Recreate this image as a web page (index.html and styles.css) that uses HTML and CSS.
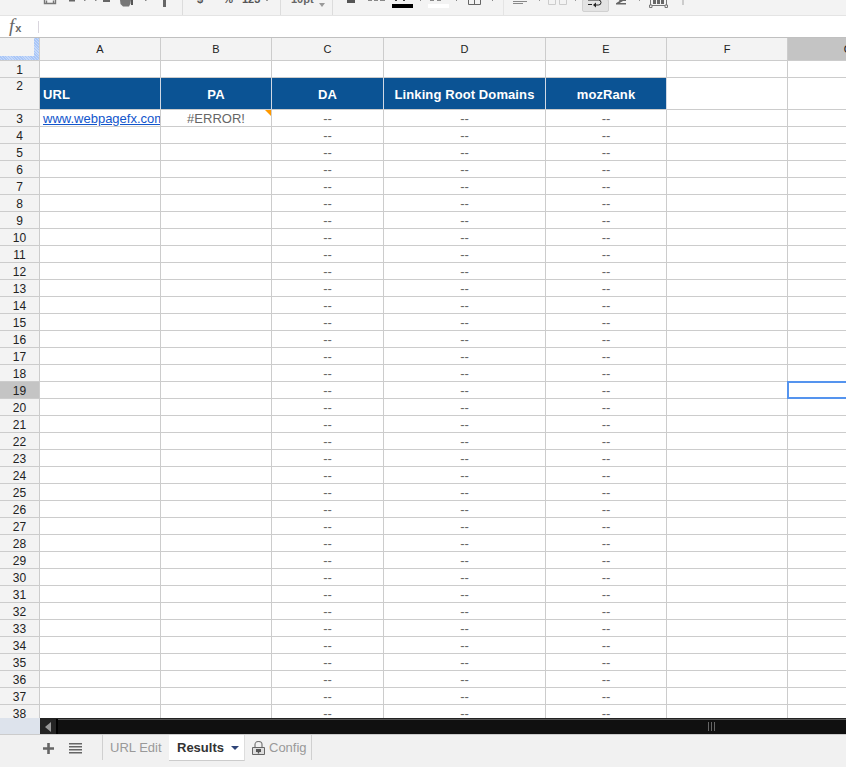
FILE: index.html
```html
<!DOCTYPE html>
<html lang="en">
<head>
<meta charset="utf-8">
<title>Results</title>
<link rel="stylesheet" href="styles.css">
</head>
<body>
<div class="app">
  <div class="toolbar">
    <div class="tb-group tb-g1">
      <svg width="182" height="15" viewBox="0 0 182 15">
        <path d="M44.500 0v3.500h2v-3M55.500 0v3.500h-2v-3M46 3.500h8" fill="none" stroke="#777" stroke-width="1.400"/>
        <path d="M69 0h6v1.600h-6zM103 0h7v2h-7z" fill="#666"/>
        <path d="M84 0h1.500v1H84zM95 0h1.500v1H95zM145 0h1.500v1H145z" fill="#888"/>
        <path d="M120 0h11l-.5 3.500-1.500 3h-6l-2.500-2.500z" fill="#777"/>
        <path d="M131 0h2v5h-2z" fill="#555"/>
        <path d="M163 0h3v7h-3z" fill="#666"/>
      </svg>
    </div>
    <div class="tb-group tb-g2">
      <span class="tb-text tb-dollar">$</span>
      <span class="tb-text tb-pct">%</span>
      <span class="tb-text tb-num">123</span>
      <i class="tb-dot"></i>
    </div>
    <div class="tb-group tb-g3">
      <span class="tb-text tb-size">10pt</span>
      <i class="tb-caret"></i>
    </div>
    <div class="tb-group tb-g4">
      <svg width="170" height="15" viewBox="0 0 170 15">
        <path d="M14 0h8v3h-8z" fill="#555"/>
        <path d="M35 0h4v1h-4zM41 0h4v1h-4zM47 0h5v1h-5zM87 0h1v1h-1zM123 0h1v1h-1zM159 0h1v1h-1zM97 0h4v1h-4zM104 0h4v1h-4z" fill="#888"/>
        <path d="M62 0h2v1h-2zM70 0h2v1h-2z" fill="#444"/>
        <path d="M59 4h21v4H59z" fill="#000"/>
        <path d="M95 4h21v4H95z" fill="#fff"/>
        <path d="M135.500 0v4.500h12V0M141.500 0v4.500" fill="none" stroke="#666"/>
      </svg>
    </div>
    <div class="tb-group tb-g5">
      <svg class="tb-icons-left" width="78" height="15" viewBox="0 0 78 15">
        <path d="M9 1.500h14M9 3.500h10" fill="none" stroke="#888"/>
        <path d="M35 0h1v1h-1zM71 0h1v1h-1z" fill="#999"/>
        <path d="M44.500 0v4.500h7V0M55.500 0v4.500h7V0" fill="none" stroke="#ccc"/>
      </svg>
      <button class="tb-wrap" type="button" aria-label="Text wrapping">
        <svg width="17" height="9" viewBox="0 0 17 9">
          <path d="M1 1h10.500a2.500 2.500 0 0 1 0 5H8M1 5.500h4" fill="none" stroke="#222" stroke-width="1"/>
          <path d="M9 3.500v5L6 6z" fill="#222"/>
        </svg>
      </button>
      <svg class="tb-icons-right" width="182" height="15" viewBox="0 0 182 15">
        <path d="M3 0h7v1H7L4 2.800V3h6v1.500H0V3.200L3.500 1z" fill="#666"/>
        <path d="M23 0h1v1h-1z" fill="#999"/>
        <path d="M34.500 0v5.500M50.500 0v5.500M35 5.500h15" fill="none" stroke="#777"/>
        <path d="M37 0h3v4h-3zM41 0h3v4h-3zM45 0h3v4h-3z" fill="#666"/>
        <path d="M33.500 5h2.500v2.500h-2.500zM49 5h2.500v2.500H49z" fill="#f3f3f3" stroke="#777"/>
        <path d="M66 0h2v5h-2z" fill="#ccc"/>
      </svg>
    </div>
  </div>

  <div class="formula">
    <span class="fx"><i>f</i><small>x</small></span>
    <span class="fx-sep"></span>
  </div>

  <div class="grid-wrap">
    <table class="sheet">
      <colgroup>
        <col class="c-head"><col class="c-a"><col class="c-b"><col class="c-c"><col class="c-d"><col class="c-e"><col class="c-f"><col class="c-g">
      </colgroup>
      <thead>
        <tr><th class="corner"></th><th>A</th><th>B</th><th>C</th><th>D</th><th>E</th><th>F</th><th class="picked">G</th></tr>
      </thead>
      <tbody>
        <tr><th>1</th><td></td><td></td><td></td><td></td><td></td><td></td><td></td></tr>
        <tr class="title-row"><th>2</th><td class="hd hd-left">URL</td><td class="hd">PA</td><td class="hd">DA</td><td class="hd">Linking Root Domains</td><td class="hd">mozRank</td><td></td><td></td></tr>
        <tr><th>3</th><td class="url"><a href="#">www.webpagefx.com</a></td><td class="err">#ERROR!<i class="note"></i></td><td>--</td><td>--</td><td>--</td><td></td><td></td></tr>
        <tr><th>4</th><td></td><td></td><td>--</td><td>--</td><td>--</td><td></td><td></td></tr>
        <tr><th>5</th><td></td><td></td><td>--</td><td>--</td><td>--</td><td></td><td></td></tr>
        <tr><th>6</th><td></td><td></td><td>--</td><td>--</td><td>--</td><td></td><td></td></tr>
        <tr><th>7</th><td></td><td></td><td>--</td><td>--</td><td>--</td><td></td><td></td></tr>
        <tr><th>8</th><td></td><td></td><td>--</td><td>--</td><td>--</td><td></td><td></td></tr>
        <tr><th>9</th><td></td><td></td><td>--</td><td>--</td><td>--</td><td></td><td></td></tr>
        <tr><th>10</th><td></td><td></td><td>--</td><td>--</td><td>--</td><td></td><td></td></tr>
        <tr><th>11</th><td></td><td></td><td>--</td><td>--</td><td>--</td><td></td><td></td></tr>
        <tr><th>12</th><td></td><td></td><td>--</td><td>--</td><td>--</td><td></td><td></td></tr>
        <tr><th>13</th><td></td><td></td><td>--</td><td>--</td><td>--</td><td></td><td></td></tr>
        <tr><th>14</th><td></td><td></td><td>--</td><td>--</td><td>--</td><td></td><td></td></tr>
        <tr><th>15</th><td></td><td></td><td>--</td><td>--</td><td>--</td><td></td><td></td></tr>
        <tr><th>16</th><td></td><td></td><td>--</td><td>--</td><td>--</td><td></td><td></td></tr>
        <tr><th>17</th><td></td><td></td><td>--</td><td>--</td><td>--</td><td></td><td></td></tr>
        <tr><th>18</th><td></td><td></td><td>--</td><td>--</td><td>--</td><td></td><td></td></tr>
        <tr><th class="picked">19</th><td></td><td></td><td>--</td><td>--</td><td>--</td><td></td><td class="active"><i class="selection"></i></td></tr>
        <tr><th>20</th><td></td><td></td><td>--</td><td>--</td><td>--</td><td></td><td></td></tr>
        <tr><th>21</th><td></td><td></td><td>--</td><td>--</td><td>--</td><td></td><td></td></tr>
        <tr><th>22</th><td></td><td></td><td>--</td><td>--</td><td>--</td><td></td><td></td></tr>
        <tr><th>23</th><td></td><td></td><td>--</td><td>--</td><td>--</td><td></td><td></td></tr>
        <tr><th>24</th><td></td><td></td><td>--</td><td>--</td><td>--</td><td></td><td></td></tr>
        <tr><th>25</th><td></td><td></td><td>--</td><td>--</td><td>--</td><td></td><td></td></tr>
        <tr><th>26</th><td></td><td></td><td>--</td><td>--</td><td>--</td><td></td><td></td></tr>
        <tr><th>27</th><td></td><td></td><td>--</td><td>--</td><td>--</td><td></td><td></td></tr>
        <tr><th>28</th><td></td><td></td><td>--</td><td>--</td><td>--</td><td></td><td></td></tr>
        <tr><th>29</th><td></td><td></td><td>--</td><td>--</td><td>--</td><td></td><td></td></tr>
        <tr><th>30</th><td></td><td></td><td>--</td><td>--</td><td>--</td><td></td><td></td></tr>
        <tr><th>31</th><td></td><td></td><td>--</td><td>--</td><td>--</td><td></td><td></td></tr>
        <tr><th>32</th><td></td><td></td><td>--</td><td>--</td><td>--</td><td></td><td></td></tr>
        <tr><th>33</th><td></td><td></td><td>--</td><td>--</td><td>--</td><td></td><td></td></tr>
        <tr><th>34</th><td></td><td></td><td>--</td><td>--</td><td>--</td><td></td><td></td></tr>
        <tr><th>35</th><td></td><td></td><td>--</td><td>--</td><td>--</td><td></td><td></td></tr>
        <tr><th>36</th><td></td><td></td><td>--</td><td>--</td><td>--</td><td></td><td></td></tr>
        <tr><th>37</th><td></td><td></td><td>--</td><td>--</td><td>--</td><td></td><td></td></tr>
        <tr><th>38</th><td></td><td></td><td>--</td><td>--</td><td>--</td><td></td><td></td></tr>
      </tbody>
    </table>
  </div>

  <div class="scrollbar">
    <div class="sb-gutter"></div>
    <div class="sb-track">
      <span class="sb-btn"><i class="sb-arrow"></i></span>
      <span class="sb-grip"><i></i><i></i><i></i></span>
    </div>
  </div>

  <div class="tabs">
    <svg class="tab-add" width="11" height="11" viewBox="0 0 11 11"><path d="M4.200 0h2.600v4.200H11v2.600H6.800V11H4.200V6.800H0V4.200h4.200z" fill="#666"/></svg>
    <svg class="tab-list" width="13" height="11" viewBox="0 0 13 11"><path d="M0 0h13v1.500H0zM0 3h13v1.500H0zM0 6h13v1.500H0zM0 9h13v1.500H0z" fill="#666"/></svg>
    <div class="tab tab-plain">URL Edit</div>
    <div class="tab tab-active">Results<i class="tab-caret"></i></div>
    <div class="tab tab-locked">
      <svg width="13" height="14" viewBox="0 0 13 14">
        <path d="M3 6V3.500a3.500 3 0 0 1 7 0V6" fill="none" stroke="#777" stroke-width="1.200"/>
        <path d="M.5 6.500h12v7H.5z" fill="#ddd" stroke="#666"/>
        <path d="M4 8h5v3H7.200v1.500H5.800V11H4z" fill="#555"/>
      </svg>
      Config
    </div>
  </div>
</div>
</body>
</html>
```
FILE: styles.css
```css
* { box-sizing: border-box; }
html, body { margin: 0; padding: 0; }
body { font-family: "Liberation Sans", Arial, sans-serif; background: #fff; overflow: hidden; }
.app { width: 846px; height: 767px; display: flex; flex-direction: column; overflow: hidden; }

/* toolbar, scrolled so only its lower edge shows */
.toolbar { flex: 0 0 16px; display: flex; background: #f3f3f3; border-bottom: 1px solid #e4e4e4; overflow: hidden; }
.tb-group { height: 15px; display: flex; align-items: flex-end; border-right: 1px solid #dcdcdc; position: relative; }
.tb-g1 { width: 183px; }
.tb-g2 { width: 98px; }
.tb-g3 { width: 52px; }
.tb-g4 { width: 171px; border-right-color: #e4e4e4; }
.tb-g5 { flex: 1; border-right: 0; align-items: flex-start; }
.tb-g1 svg, .tb-g4 svg { display: block; }
.tb-text { font-size: 11px; line-height: 12px; color: #555; margin-bottom: 10px; font-weight: bold; }
.tb-dollar { margin-left: 14px; }
.tb-pct { margin-left: 20px; }
.tb-num { margin-left: 9px; }
.tb-dot { width: 2px; height: 1px; background: #999; margin: 0 0 14px 6px; }
.tb-size { margin-left: 10px; color: #666; }
.tb-caret { width: 0; height: 0; border: 3px solid transparent; border-top: 4px solid #999; border-bottom: 0; margin: 0 0 8px 5px; }
.tb-icons-left { flex: none; }
.tb-wrap { flex: none; width: 27px; height: 13px; padding: 0; margin: -1px 0 0 0; background: #e3e3e3; border: 1px solid #d0d0d0; border-radius: 2px; display: flex; align-items: flex-end; justify-content: center; }
.tb-wrap svg { display: block; margin-bottom: 3px; }
.tb-icons-right { flex: none; margin-left: 7px; }

/* formula bar */
.formula { flex: 0 0 22px; height: 22px; min-height: 0; overflow: hidden; display: flex; align-items: center; background: #fff; border-bottom: 1px solid #c0c0c0; }
.fx { width: 38px; padding-left: 9px; font-family: "Liberation Serif", serif; color: #666; font-size: 19px; line-height: 19px; }
.fx small { font-family: "Liberation Sans", sans-serif; font-size: 11px; font-weight: bold; margin-left: 1px; }
.fx-sep { width: 1px; height: 12px; background: #d9d5dd; }

/* sheet */
.grid-wrap { flex: 0 0 680px; overflow: hidden; background: #fff; }
.sheet { table-layout: fixed; width: 909px; border-collapse: separate; border-spacing: 0; font-size: 13px; color: #666; }
.c-head { width: 40px; }
.c-a { width: 121px; }
.c-b { width: 111px; }
.c-c { width: 112px; }
.c-d { width: 162px; }
.c-e { width: 121px; }
.c-f { width: 121px; }
.c-g { width: 121px; }
.sheet th, .sheet td { border-right: 1px solid #ccc; border-bottom: 1px solid #ccc; padding: 2px 0 0; height: 17px; line-height: 14px; text-align: center; white-space: nowrap; overflow: hidden; }
.sheet th { background: #f3f3f3; font-weight: normal; font-size: 12px; color: #222; vertical-align: top; }
.sheet thead th { height: 23px; padding: 0; font-size: 11px; line-height: 21px; vertical-align: middle; }
.sheet thead th.corner { background:
  repeating-linear-gradient(45deg, #a9c6f7 0 1px, #c5d9fa 1px 2px) right top / 5px 100% no-repeat,
  repeating-linear-gradient(45deg, #a9c6f7 0 1px, #c5d9fa 1px 2px) left bottom / 100% 4px no-repeat,
  #f3f3f3; }
.sheet th.picked, .sheet thead th.picked { background: #c4c4c4; }
.title-row th, .title-row td { height: 32px; }
.sheet .title-row th { padding-top: 0; line-height: 16px; }
.sheet .hd { background: #0b5394; color: #fff; font-weight: bold; font-size: 13px; letter-spacing: .1px; line-height: 16px; padding-top: 2px; border-right-color: #d0d8e4; vertical-align: middle; }
.sheet .hd-left { text-align: left; padding-left: 3px; }
.sheet td.url { text-align: left; padding-left: 3px; }
.url a { color: #1155cc; text-decoration: underline; font-size: 13px; }
.sheet td.err, .sheet td.active { position: relative; overflow: visible; }
.note { position: absolute; top: 0; right: 0; width: 0; height: 0; border-top: 6px solid #f90; border-left: 6px solid transparent; }
.selection { position: absolute; top: -1px; left: -1px; right: -1px; bottom: -1px; border: 2px solid #5594ee; }

/* horizontal scrollbar */
.scrollbar { flex: 0 0 17px; display: flex; border-bottom: 1px solid #ccc; }
.sb-gutter { width: 40px; background: #dde3ec; }
.sb-track { flex: 1; position: relative; background: #101010; border-top: 1px solid #222; box-shadow: inset 0 1px 0 #555; display: flex; align-items: stretch; }
.sb-btn { width: 18px; background: #242424; border-right: 2px solid #000; display: flex; align-items: center; justify-content: center; }
.sb-arrow { width: 0; height: 0; border: 5px solid transparent; border-right: 6px solid #999; border-left: 0; }
.sb-grip { position: absolute; left: 668px; top: 3px; display: flex; gap: 2px; }
.sb-grip i { width: 1px; height: 9px; background: #666; }

/* sheet tabs */
.tabs { flex: 1; display: flex; align-items: flex-start; background: #f1f1f1; font-size: 13px; line-height: 25px; color: #999; }
.tab-add { margin: 8px 0 0 43px; flex: none; }
.tab-list { margin: 8px 0 0 15px; flex: none; }
.tab { height: 25px; white-space: nowrap; }
.tab-plain { margin-left: 20px; padding: 0 0 0 7px; border-left: 1px solid #d0d0d0; width: 67px; }
.tab-active { width: 76px; padding-left: 8px; background: #fff; color: #333; font-weight: bold; border-bottom: 1px solid #ccc; border-right: 1px solid #ddd; height: 26px; display: flex; align-items: center; }
.tab-caret { width: 0; height: 0; margin-left: 7px; border: 4px solid transparent; border-top: 4px solid #2f4578; border-bottom: 0; }
.tab-locked { width: 67px; padding-left: 7px; border-right: 1px solid #d0d0d0; display: flex; align-items: center; gap: 4px; }
```
